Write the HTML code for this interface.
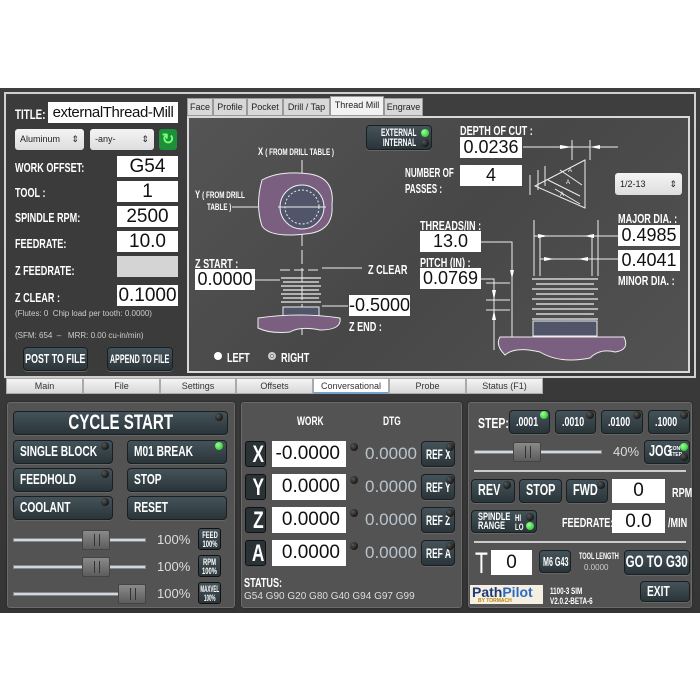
<!DOCTYPE html>
<html><head><meta charset="utf-8"><style>
*{margin:0;padding:0;box-sizing:border-box}
body{width:700px;height:700px;background:#fff;position:relative;overflow:hidden;font-family:"Liberation Sans",sans-serif}
.a{position:absolute}
.app{left:0;top:88px;width:700px;height:525px;background:linear-gradient(180deg,#3e3e3e,#353535)}
.lb{position:absolute;color:#fff;font-family:"Liberation Sans",sans-serif;font-weight:bold;font-size:13px;white-space:nowrap;line-height:1;transform:scaleX(.7);transform-origin:0 0}
.in{position:absolute;background:#fff;color:#111;text-align:right;padding-right:6px;font-size:18px;line-height:21px;height:21px;white-space:nowrap}
.btn{position:absolute;background:linear-gradient(180deg,#44535a,#2a3539);border:1px solid #1a1f22;border-radius:4px;color:#fff;font-weight:bold;font-size:15px;line-height:22px;padding-left:6px;box-shadow:0 1px 0 #666;white-space:nowrap;overflow:visible}
.n{display:inline-block;transform:scaleX(.68);transform-origin:0 50%}
.c{display:flex;justify-content:center;padding:0}
.c .n{transform-origin:50% 50%;flex:none}
.led{position:absolute;width:8px;height:8px;border-radius:50%;background:radial-gradient(circle at 35% 35%,#555,#000)}
.g{background:radial-gradient(circle at 35% 35%,#9f9,#1b1)}
.tab{position:absolute;top:98px;height:18px;background:#d8d8d8;border:1px solid #999;font-size:9px;line-height:16px;text-align:center;color:#222;white-space:nowrap}
.bt{position:absolute;top:378px;height:16px;background:linear-gradient(#f4f4f4,#d8d8d8);border:1px solid #aaa;font-size:9px;line-height:14px;text-align:center;color:#333}
.pn{position:absolute;background:#535353;border:1px solid #6a6a6a;border-radius:3px;box-shadow:0 0 2px #222}
.trk{position:absolute;height:4px;background:#cfd8e0;border:1px solid #888}
.th{position:absolute;width:28px;height:20px;background:linear-gradient(#8a8a8a,#5c5c5c);border:1px solid #444;border-radius:2px}
.th:after{content:"";position:absolute;left:11px;top:3px;width:4px;height:12px;border-left:1px solid #333;border-right:1px solid #333}
.pct{position:absolute;color:#ddd;font-size:13px}
.zb{position:absolute;width:21px;height:26px;background:#2a3236;border:1px solid #111;border-radius:3px;color:#fff;font-weight:bold;font-size:24px;line-height:25px;text-align:right;padding-right:1px;overflow:hidden}
.zb .n{transform:scaleX(.72);transform-origin:100% 50%}
.dtg{position:absolute;color:#b8c4cc;font-size:17px}
.sm{position:absolute;background:linear-gradient(#44535a,#2a3539);border:1px solid #111;border-radius:3px;color:#fff;font-weight:bold;font-size:9px;line-height:9px;white-space:nowrap;display:flex;justify-content:center}
.sm .n{transform-origin:50% 50%;transform:scaleX(.65);flex:none;text-align:center}
</style></head><body>
<div class="a app"></div>
<div class="a" style="left:4px;top:92px;width:692px;height:286px;border:2px solid #cfcfcf"></div>
<div class="a" style="left:7px;top:95px;width:180px;height:280px;background:#3b3b3b"></div>
<div class="lb" style="left:15px;top:107px;font-size:14px">TITLE:</div>
<div class="in" style="left:48px;top:102px;width:130px;font-size:15px;letter-spacing:-0.4px;text-align:center;padding:0">externalThread-Mill</div>
<div class="a" style="left:15px;top:129px;width:69px;height:21px;background:linear-gradient(#f4f4f4,#ddd);border-radius:3px;font-size:9px;line-height:21px;padding-left:5px;color:#222">Aluminum <span style="position:absolute;right:5px">⇕</span></div>
<div class="a" style="left:90px;top:129px;width:64px;height:21px;background:linear-gradient(#f4f4f4,#ddd);border-radius:3px;font-size:9px;line-height:21px;padding-left:5px;color:#222">-any- <span style="position:absolute;right:5px">⇕</span></div>
<div class="a" style="left:159px;top:129px;width:18px;height:21px;background:#1d8f3a;border-radius:3px;color:#7f7;font-size:15px;text-align:center;line-height:21px;font-weight:bold">↻</div>
<div class="lb" style="left:15px;top:161px">WORK OFFSET:</div><div class="in" style="left:117px;top:156px;width:61px;text-align:center;padding:0;font-size:19px">G54</div>
<div class="lb" style="left:15px;top:186px">TOOL :</div><div class="in" style="left:117px;top:181px;width:61px;text-align:center;padding:0;font-size:19px">1</div>
<div class="lb" style="left:15px;top:211px">SPINDLE RPM:</div><div class="in" style="left:117px;top:206px;width:61px;text-align:center;padding:0;font-size:19px">2500</div>
<div class="lb" style="left:15px;top:237px">FEEDRATE:</div><div class="in" style="left:117px;top:231px;width:61px;text-align:center;padding:0;font-size:19px">10.0</div>
<div class="lb" style="left:15px;top:264px">Z FEEDRATE:</div><div class="a" style="left:117px;top:256px;width:61px;height:21px;background:#d4d4d4"></div>
<div class="lb" style="left:15px;top:291px">Z CLEAR :</div><div class="in" style="left:117px;top:285px;width:61px;text-align:center;padding:0;font-size:19px">0.1000</div>
<div class="a" style="left:15px;top:309px;font-size:8px;color:#ccc">(Flutes: 0&nbsp; Chip load per tooth: 0.0000)</div>
<div class="a" style="left:15px;top:331px;font-size:8px;color:#ccc">(SFM: 654 &nbsp;–&nbsp;&nbsp; MRR: 0.00 cu-in/min)</div>
<div class="btn c" style="left:23px;top:347px;width:65px;height:24px;font-size:13px"><span class="n">POST TO FILE</span></div>
<div class="btn c" style="left:107px;top:347px;width:66px;height:24px;font-size:12px"><span class="n" style="transform:scaleX(.6)">APPEND TO FILE</span></div>
<div class="tab" style="left:187px;width:26px">Face</div>
<div class="tab" style="left:213px;width:34px">Profile</div>
<div class="tab" style="left:247px;width:36px">Pocket</div>
<div class="tab" style="left:283px;width:47px">Drill / Tap</div>
<div class="tab" style="left:330px;width:54px;background:#f2f2f2;top:96px;height:20px">Thread Mill</div>
<div class="tab" style="left:384px;width:39px">Engrave</div>
<div class="a" style="left:187px;top:116px;width:503px;height:257px;background:linear-gradient(135deg,#545454,#474747 50%,#525252);border:2px solid #d8d8d8"></div>
<svg class="a" style="left:0;top:0" width="700" height="400">
<g stroke="#eee" fill="none" stroke-width="1">
<path d="M302 160V335" stroke-dasharray="14 4"/>
<path d="M262 180 Q280 170 310 174 Q335 178 332 205 Q334 232 305 234 Q270 238 262 226 Q255 205 262 180Z" fill="#7a5f80"/>
<circle cx="302" cy="207" r="22" fill="#50556a"/><circle cx="302" cy="207" r="17" stroke-dasharray="2 2"/>
<path d="M278 207H326M232 207H258"/>
<path d="M255 280H280M322 268H362" />
<path d="M280 270H322" stroke-dasharray="10 4"/>
<g stroke-width="1.3"><path d="M281 278H321M283 282H319M281 286H321M283 290H319M281 294H321M283 298H319M281 302H321"/></g>
<rect x="283" y="307" width="36" height="11" fill="#50556a"/>
<path d="M258 318 Q300 312 340 318 Q342 330 320 330 Q300 326 290 332 Q270 334 258 328Z" fill="#7a5f80"/>
<path d="M322 306H348"/>
<path d="M523 147H560M560 147H590M590 140V160M572 140V160M600 147H618"/>
<path d="M535 186L585 160V208Z"/><path d="M548 180L580 196M555 189L580 204M560 170L582 185"/><path d="M530 175V195M538 170V190M545 166V186"/>
<path d="M481 242H512V350M481 279H494V350M486 283H510M486 300H510M486 310H510"/>
<path d="M534 220V276M598 220V276M540 235V276M592 235V276M534 236H598M540 259H592M598 236H618M592 259H618"/>
<g stroke-width="1.3"><path d="M532 279H598M536 284H594M532 289H598M536 294H594M532 299H598M536 304H594M532 309H598M536 314H594M532 319H598"/></g>
<rect x="533" y="321" width="64" height="15" fill="#50556a"/>
<path d="M500 337H624Q630 350 615 352Q600 348 590 358Q560 364 540 352Q515 346 505 355Q495 345 500 337Z" fill="#7a5f80"/>
</g>
<g fill="#fff" stroke="none"><path d="M560 145L572 147L560 149ZM600 145L590 147L600 149ZM538 234L548 236L538 238ZM594 234L584 236L594 238ZM544 257L554 259L544 261ZM588 257L578 259L588 261ZM510 270L512 279L514 270ZM492 290L494 300L496 290ZM492 320L494 310L496 320Z"/></g>
<g fill="#fff" font-family="Liberation Sans" font-size="6"><text x="568" y="172">A</text><text x="566" y="184">A</text><text x="560" y="196">A</text></g>
</svg>
<div class="lb" style="left:258px;top:147px;font-size:11px">X <span style="font-size:9px">( FROM DRILL TABLE )</span></div>
<div class="lb" style="left:195px;top:190px;font-size:11px">Y <span style="font-size:9px">( FROM DRILL</span></div>
<div class="lb" style="left:207px;top:203px;font-size:9px">TABLE )</div>
<div class="lb" style="left:195px;top:257px">Z START :</div>
<div class="in" style="left:195px;top:269px;width:60px;text-align:center;padding:0">0.0000</div>
<div class="lb" style="left:368px;top:263px">Z CLEAR</div>
<div class="in" style="left:349px;top:295px;width:61px;text-align:center;padding:0">-0.5000</div>
<div class="lb" style="left:349px;top:320px">Z END :</div>
<div class="a" style="left:214px;top:352px;width:8px;height:8px;border-radius:50%;background:#fff"></div><div class="lb" style="left:227px;top:351px">LEFT</div>
<div class="a" style="left:268px;top:352px;width:8px;height:8px;border-radius:50%;background:#fff;border:2px solid #ccc;box-shadow:inset 0 0 0 1px #777"></div><div class="lb" style="left:281px;top:351px">RIGHT</div>
<div class="btn" style="left:366px;top:125px;width:66px;height:25px;padding:2px 0 0 14px;font-size:11px;line-height:10px;border-radius:4px"><span class="n" style="transform:scaleX(.6)">EXTERNAL<br>&nbsp;INTERNAL</span></div>
<div class="led g" style="left:421px;top:129px"></div><div class="led" style="left:421px;top:139px"></div>
<div class="lb" style="left:460px;top:124px">DEPTH OF CUT :</div>
<div class="in" style="left:460px;top:137px;width:62px;text-align:center;padding:0">0.0236</div>
<div class="lb" style="left:405px;top:166px;transform:scaleX(.62)">NUMBER OF</div><div class="lb" style="left:405px;top:182px;transform:scaleX(.62)">PASSES :</div>
<div class="in" style="left:460px;top:165px;width:62px;text-align:center;padding:0">4</div>
<div class="a" style="left:615px;top:173px;width:67px;height:22px;background:linear-gradient(#f4f4f4,#ddd);border-radius:3px;font-size:9px;line-height:22px;padding-left:5px;color:#222">1/2-13<span style="position:absolute;right:5px">⇕</span></div>
<div class="lb" style="left:420px;top:219px">THREADS/IN :</div>
<div class="in" style="left:420px;top:231px;width:61px;text-align:center;padding:0">13.0</div>
<div class="lb" style="left:420px;top:256px">PITCH (IN) :</div>
<div class="in" style="left:420px;top:268px;width:61px;text-align:center;padding:0">0.0769</div>
<div class="lb" style="left:618px;top:212px">MAJOR DIA. :</div>
<div class="in" style="left:618px;top:225px;width:62px;text-align:center;padding:0">0.4985</div>
<div class="in" style="left:618px;top:250px;width:62px;text-align:center;padding:0">0.4041</div>
<div class="lb" style="left:618px;top:274px">MINOR DIA. :</div>
<div class="bt" style="left:6px;width:77px">Main</div>
<div class="bt" style="left:83px;width:77px">File</div>
<div class="bt" style="left:160px;width:76px">Settings</div>
<div class="bt" style="left:236px;width:77px">Offsets</div>
<div class="bt" style="left:313px;width:76px;background:#fff;border-bottom:2px solid #7aa0c8">Conversational</div>
<div class="bt" style="left:389px;width:77px">Probe</div>
<div class="bt" style="left:466px;width:77px">Status (F1)</div>
<div class="pn" style="left:7px;top:402px;width:228px;height:206px"></div>
<div class="btn c" style="left:13px;top:411px;width:215px;height:24px;font-size:21px;line-height:22px"><span class="n" style="transform:scaleX(.72)">CYCLE START</span></div><div class="led" style="left:215px;top:413px"></div>
<div class="btn" style="left:13px;top:440px;width:100px;height:24px"><span class="n">SINGLE BLOCK</span></div><div class="led" style="left:101px;top:442px"></div>
<div class="btn" style="left:127px;top:440px;width:100px;height:24px"><span class="n">M01 BREAK</span></div><div class="led g" style="left:215px;top:442px"></div>
<div class="btn" style="left:13px;top:468px;width:100px;height:24px"><span class="n">FEEDHOLD</span></div><div class="led" style="left:101px;top:470px"></div>
<div class="btn" style="left:127px;top:468px;width:100px;height:24px"><span class="n">STOP</span></div>
<div class="btn" style="left:13px;top:496px;width:100px;height:24px"><span class="n">COOLANT</span></div><div class="led" style="left:101px;top:498px"></div>
<div class="btn" style="left:127px;top:496px;width:100px;height:24px"><span class="n">RESET</span></div>
<div class="trk" style="left:13px;top:538px;width:133px"></div><div class="th" style="left:82px;top:530px"></div><div class="pct" style="left:157px;top:532px">100%</div><div class="sm" style="left:198px;top:528px;width:23px;height:22px;padding-top:2px"><span class="n">FEED<br>100%</span></div>
<div class="trk" style="left:13px;top:565px;width:133px"></div><div class="th" style="left:82px;top:557px"></div><div class="pct" style="left:157px;top:559px">100%</div><div class="sm" style="left:198px;top:555px;width:23px;height:22px;padding-top:2px"><span class="n">RPM<br>100%</span></div>
<div class="trk" style="left:13px;top:592px;width:133px"></div><div class="th" style="left:118px;top:584px"></div><div class="pct" style="left:157px;top:586px">100%</div><div class="sm" style="left:198px;top:582px;width:23px;height:22px;padding-top:2px"><span class="n" style="transform:scaleX(.5)">MAXVEL<br>100%</span></div>
<div class="pn" style="left:241px;top:402px;width:221px;height:206px"></div>
<div class="lb" style="left:297px;top:415px;font-size:12px">WORK</div><div class="lb" style="left:383px;top:415px;font-size:12px">DTG</div>
<div class="zb" style="left:245px;top:441px"><span class="n">X</span></div><div class="in" style="left:272px;top:441px;width:74px;height:26px;line-height:26px;font-size:19px">-0.0000</div><div class="led" style="left:350px;top:443px"></div><div class="dtg" style="left:365px;top:444px">0.0000</div><div class="btn" style="left:421px;top:441px;width:34px;height:26px;font-size:14px;padding-left:4px;line-height:24px"><span class="n" style="transform:scaleX(.6)">REF X</span></div><div class="led" style="left:446px;top:443px"></div>
<div class="zb" style="left:245px;top:474px"><span class="n">Y</span></div><div class="in" style="left:272px;top:474px;width:74px;height:26px;line-height:26px;font-size:19px">0.0000</div><div class="led" style="left:350px;top:476px"></div><div class="dtg" style="left:365px;top:477px">0.0000</div><div class="btn" style="left:421px;top:474px;width:34px;height:26px;font-size:14px;padding-left:4px;line-height:24px"><span class="n" style="transform:scaleX(.6)">REF Y</span></div><div class="led" style="left:446px;top:476px"></div>
<div class="zb" style="left:245px;top:507px"><span class="n">Z</span></div><div class="in" style="left:272px;top:507px;width:74px;height:26px;line-height:26px;font-size:19px">0.0000</div><div class="led" style="left:350px;top:509px"></div><div class="dtg" style="left:365px;top:510px">0.0000</div><div class="btn" style="left:421px;top:507px;width:34px;height:26px;font-size:14px;padding-left:4px;line-height:24px"><span class="n" style="transform:scaleX(.6)">REF Z</span></div><div class="led" style="left:446px;top:509px"></div>
<div class="zb" style="left:245px;top:540px"><span class="n">A</span></div><div class="in" style="left:272px;top:540px;width:74px;height:26px;line-height:26px;font-size:19px">0.0000</div><div class="led" style="left:350px;top:542px"></div><div class="dtg" style="left:365px;top:543px">0.0000</div><div class="btn" style="left:421px;top:540px;width:34px;height:26px;font-size:14px;padding-left:4px;line-height:24px"><span class="n" style="transform:scaleX(.6)">REF A</span></div><div class="led" style="left:446px;top:542px"></div>
<div class="lb" style="left:244px;top:576px;font-size:13px">STATUS:</div>
<div class="a" style="left:244px;top:591px;font-size:10px;color:#ddd">G54 G90 G20 G80 G40 G94 G97 G99</div>
<div class="pn" style="left:468px;top:402px;width:224px;height:206px"></div>
<div class="lb" style="left:478px;top:416px;font-size:15px">STEP:</div>
<div class="btn" style="left:509px;top:410px;width:41px;height:24px;font-size:13px;padding-left:6px"><span class="n">.0001</span></div><div class="led g" style="left:540px;top:411px"></div>
<div class="btn" style="left:555px;top:410px;width:41px;height:24px;font-size:13px;padding-left:6px"><span class="n">.0010</span></div><div class="led" style="left:586px;top:411px"></div>
<div class="btn" style="left:601px;top:410px;width:42px;height:24px;font-size:13px;padding-left:6px"><span class="n">.0100</span></div><div class="led" style="left:633px;top:411px"></div>
<div class="btn" style="left:648px;top:410px;width:42px;height:24px;font-size:13px;padding-left:6px"><span class="n">.1000</span></div><div class="led" style="left:680px;top:411px"></div>
<div class="trk" style="left:474px;top:450px;width:128px"></div><div class="th" style="left:513px;top:442px"></div><div class="pct" style="left:613px;top:444px">40%</div>
<div class="btn" style="left:644px;top:440px;width:46px;height:24px;font-size:16px;padding-left:4px"><span class="n">JOG</span><span style="font-size:5px;position:absolute;left:24px;top:5px;line-height:6px">CONT<br>STEP</span></div><div class="led g" style="left:680px;top:443px"></div><div class="led" style="left:680px;top:453px"></div>
<div class="a" style="left:474px;top:470px;width:212px;height:2px;background:#ccc"></div>
<div class="btn" style="left:471px;top:479px;width:44px;height:24px;font-size:16px"><span class="n">REV</span></div><div class="led" style="left:503px;top:481px"></div>
<div class="btn" style="left:519px;top:479px;width:43px;height:24px;padding-left:6px;font-size:16px"><span class="n">STOP</span></div>
<div class="btn" style="left:566px;top:479px;width:42px;height:24px;font-size:16px"><span class="n">FWD</span></div><div class="led" style="left:597px;top:481px"></div>
<div class="in" style="left:612px;top:479px;width:53px;height:24px;line-height:24px;font-size:19px;text-align:center;padding:0">0</div><div class="lb" style="left:672px;top:486px;font-size:13px">RPM</div>
<div class="btn" style="left:471px;top:510px;width:66px;height:23px;font-size:11px;line-height:9px;padding-top:2px"><span class="n">SPINDLE<br>RANGE</span><span class="n" style="position:absolute;left:43px;top:3px;font-size:9px">HI<br>LO</span></div><div class="led" style="left:526px;top:513px"></div><div class="led g" style="left:526px;top:522px"></div>
<div class="lb" style="left:562px;top:516px;font-size:13px">FEEDRATE:</div>
<div class="in" style="left:612px;top:510px;width:53px;height:23px;line-height:23px;font-size:19px;text-align:center;padding:0">0.0</div><div class="lb" style="left:668px;top:516px;font-size:13px">/MIN</div>
<div class="a" style="left:474px;top:541px;width:212px;height:2px;background:#ccc"></div>
<div class="lb" style="left:475px;top:549px;font-size:30px;font-weight:normal">T</div>
<div class="in" style="left:491px;top:550px;width:41px;height:25px;line-height:25px;font-size:19px;text-align:center;padding:0">0</div>
<div class="btn" style="left:539px;top:550px;width:32px;height:23px;font-size:13px;padding-left:3px"><span class="n" style="transform:scaleX(.55)">M6 G43</span></div>
<div class="lb" style="left:579px;top:552px;font-size:9px;transform:scaleX(.62)">TOOL LENGTH</div><div class="a" style="left:584px;top:563px;font-size:8px;color:#ccc">0.0000</div>
<div class="btn c" style="left:624px;top:550px;width:66px;height:25px;font-size:17px"><span class="n">GO TO G30</span></div>
<div class="a" style="left:470px;top:585px;width:73px;height:19px;background:#f4efe0;color:#1d3a78;font-weight:bold;font-size:14px;line-height:14px;padding-left:2px">Path<span style="color:#2a6ac0">Pilot</span><div style="font-size:5px;color:#b8860b;line-height:5px;padding-left:6px">BY TORMACH</div></div>
<div class="lb" style="left:550px;top:586px;font-size:9px;line-height:10px">1100-3 SIM<br>V2.0.2-BETA-6</div>
<div class="btn" style="left:640px;top:581px;width:50px;height:21px;font-size:15px;line-height:19px;padding-left:6px"><span class="n">EXIT</span></div>
</body></html>
